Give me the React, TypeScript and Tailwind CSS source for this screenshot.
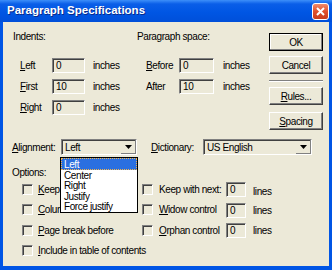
import React from "react";

const sunken = "border-t border-l border-t-[#808080] border-l-[#808080] border-b border-r border-b-white border-r-white shadow-[inset_1px_1px_0_#404040]";

const U = ({ c, rest }: { c: string; rest: string }) => (
	<span>
		<span className="underline underline-offset-1">{c}</span>
		{rest}
	</span>
);

const Field = ({ value, w }: { value: string; w: string }) => (
	<div className={`${w} h-[15px] ${sunken} bg-[#ECE9D8] pl-[3px] flex items-center leading-none`}>{value}</div>
);

const Check = () => <div className={`w-[11px] h-[11px] ${sunken} bg-[#ECE9D8] shrink-0`} />;

const Combo = ({ value, w }: { value: string; w: string }) => (
	<div className={`${w} h-[16px] ${sunken} bg-[#ECE9D8] flex items-center`}>
		<span className="flex-1 pl-[3px]">{value}</span>
		<div className="w-[15px] h-[14px] flex items-center justify-center border-b border-r border-[#808080]">
			<svg width="7" height="4" viewBox="0 0 7 4">
				<path d="M0 0h7L3.5 4z" fill="#000" />
			</svg>
		</div>
	</div>
);

const Button = ({ children, def }: { children: React.ReactNode; def?: boolean }) => (
	<div
		className={`w-[54px] h-[18px] flex items-center justify-center bg-[#ECE9D8] ${
			def
				? "border border-black shadow-[inset_-1px_-1px_0_#808080,inset_1px_1px_0_#fff]"
				: "border-t border-l border-white border-b border-r border-b-[#404040] border-r-[#404040] shadow-[inset_-1px_-1px_0_#808080]"
		}`}
	>
		{children}
	</div>
);

export default function App() {
	return (
		<div
			className="w-[332px] h-[270px] flex flex-col bg-[#0055E5] text-black text-[10px] tracking-[-0.4px]"
			style={{ fontFamily: '"Liberation Sans", Arial, sans-serif' }}
		>
			{/* Title bar */}
			<div className="h-[22px] shrink-0 flex items-center bg-[linear-gradient(180deg,#3d8ff9_0%,#0a5ee8_18%,#0056e4_55%,#004fd9_100%)] pl-[7px] pr-[3px]">
				<span className="flex-1 text-white font-bold text-[11.5px] tracking-[0px] [text-shadow:1px_1px_0_#0a2a8a]">
					Paragraph Specifications
				</span>
				<div className="w-[17px] h-[17px] rounded-[3px] border border-white bg-[linear-gradient(180deg,#f08a6a,#e0502c_50%,#c83c1c)] flex items-center justify-center">
					<svg width="9" height="9" viewBox="0 0 9 9">
						<path d="M1 1l7 7M8 1L1 8" stroke="#fff" strokeWidth="2" />
					</svg>
				</div>
			</div>

			{/* Body */}
			<div className="flex-1 mx-[3px] mb-[4px] bg-[#ECE9D8] flex flex-col pl-[10px]">
				<div className="flex">
					<div className="flex-1 min-w-0 flex flex-col">
						<div className="mt-[9px] h-[12px] flex leading-[12px]">
							<span className="w-[124px]">Indents:</span>
							<span>Paragraph space:</span>
						</div>

						<div className="mt-[15px] flex flex-col gap-[6px] pl-[7px]">
							{[
								["L", "eft", "0", "B", "efore", "0"],
								["F", "irst", "10", "", "After", "10"],
								["R", "ight", "0", "", "", ""],
							].map((r, i) => (
								<div key={i} className="h-[15px] flex items-center">
									<span className="w-[32px]">
										<U c={r[0]} rest={r[1]} />
									</span>
									<Field value={r[2]} w="w-[33px]" />
									<span className="ml-[8px] w-[53px]">inches</span>
									{r[5] && (
										<>
											<span className="w-[33px]">
												{r[3] ? <U c={r[3]} rest={r[4]} /> : r[4]}
											</span>
											<Field value={r[5]} w="w-[35px]" />
											<span className="ml-[9px]">inches</span>
										</>
									)}
								</div>
							))}
						</div>
					</div>

					{/* Buttons */}
					<div className="w-[54px] mr-[6px] mt-[11px] flex flex-col">
						<Button def>OK</Button>
						<div className="mt-[5px]">
							<Button>Cancel</Button>
						</div>
						<div className="mt-[6px] h-[2px] border-t border-[#808080] border-b border-b-white" />
						<div className="mt-[5px]">
							<Button>
								<U c="R" rest="ules..." />
							</Button>
						</div>
						<div className="mt-[7px]">
							<Button>
								<U c="S" rest="pacing" />
							</Button>
						</div>
					</div>
				</div>

				<div className="mt-[9px] h-[16px] flex items-center -ml-[1px] relative z-10">
					<span className="w-[49px]">
						<U c="A" rest="lignment:" />
					</span>
					<div className="relative">
						<Combo value="Left" w="w-[76px]" />
						<div className="absolute left-[-1px] top-[18px] w-[78px] h-[56px] bg-white border border-black flex flex-col leading-[11px]">
							<div className="h-[12px] bg-[#2a6fe0] text-white border border-dotted border-[#f5b54a] pl-[2px] flex items-center">
								Left
							</div>
							<div className="h-[10.5px] pl-[3px] flex items-center">Center</div>
							<div className="h-[10.5px] pl-[3px] flex items-center">Right</div>
							<div className="h-[10.5px] pl-[3px] flex items-center">Justify</div>
							<div className="h-[10.5px] pl-[3px] flex items-center">Force justify</div>
						</div>
					</div>
					<span className="ml-[14px] w-[52px]">
						<U c="D" rest="ictionary:" />
					</span>
					<Combo value="US English" w="w-[109px]" />
				</div>

				<div className="mt-[12px] h-[12px] leading-[12px] -ml-[1px]">Options:</div>

				<div className="mt-[3px] flex flex-col pl-[9px]">
					<div className="h-[20px] flex items-start">
						<div className="w-[120px] flex items-center gap-[5px]">
							<Check />
							<U c="K" rest="eep lines together" />
						</div>
						<div className="flex items-center gap-[6px] w-[84px]">
							<Check />
							<span>Keep with next:</span>
						</div>
						<Field value="0" w="w-[20px]" />
						<span className="ml-[7px] mt-[2px]">lines</span>
					</div>
					<div className="h-[20px] flex items-start">
						<div className="w-[120px] flex items-center gap-[5px]">
							<Check />
							<U c="C" rest="olumn break before" />
						</div>
						<div className="flex items-center gap-[6px] w-[84px]">
							<Check />
							<U c="W" rest="idow control" />
						</div>
						<div className="mt-[1px] flex items-center">
							<Field value="0" w="w-[20px]" />
							<span className="ml-[7px]">lines</span>
						</div>
					</div>
					<div className="h-[20px] flex items-start mt-[1px]">
						<div className="w-[120px] flex items-center gap-[5px]">
							<Check />
							<U c="P" rest="age break before" />
						</div>
						<div className="flex items-center gap-[6px] w-[84px]">
							<Check />
							<U c="O" rest="rphan control" />
						</div>
						<div className="flex items-center">
							<Field value="0" w="w-[20px]" />
							<span className="ml-[7px]">lines</span>
						</div>
					</div>
					<div className="h-[20px] flex items-start">
						<div className="flex items-center gap-[5px]">
							<Check />
							<U c="I" rest="nclude in table of contents" />
						</div>
					</div>
				</div>
			</div>
		</div>
	);
}
